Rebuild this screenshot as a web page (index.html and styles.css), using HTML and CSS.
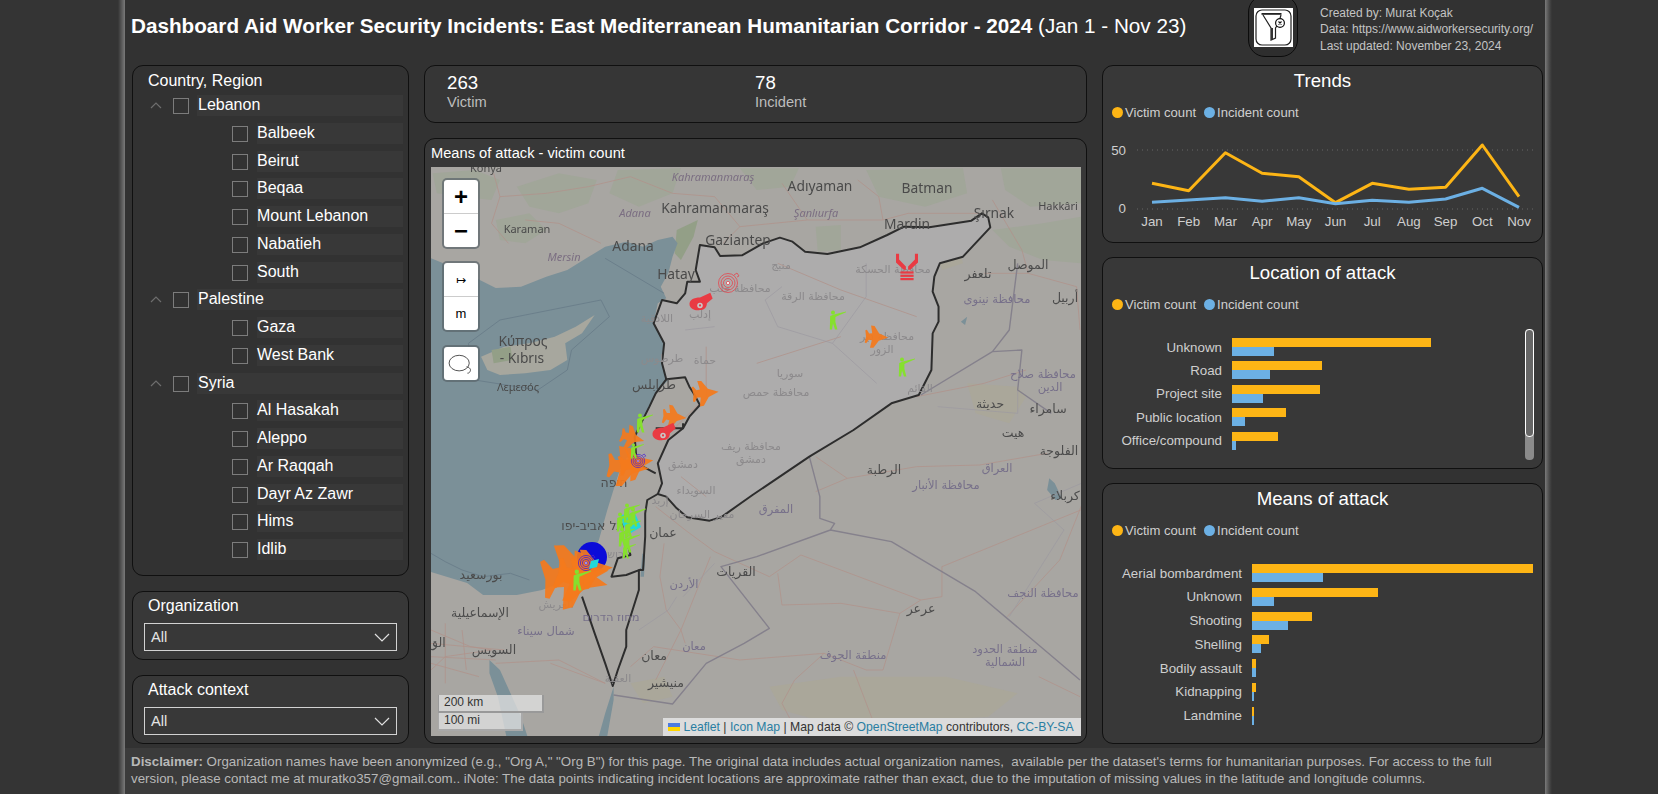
FILE: index.html
```html
<!DOCTYPE html>
<html lang="en">
<head>
<meta charset="utf-8">
<title>Dashboard Aid Worker Security Incidents</title>
<link rel="stylesheet" href="styles.css">
</head>
<body>
<div class="page">
  <div class="edge edge-left"></div>
  <main class="main">
    <header class="header">
      <h1 class="title"><b>Dashboard Aid Worker Security Incidents: East Mediterranean Humanitarian Corridor - 2024</b> (Jan 1 - Nov 23)</h1>
      <div class="logo">
        <svg class="logo-img" viewBox="0 0 39 39">
          <rect width="39" height="39" fill="#fff"/>
          <rect x="2" y="2" width="35" height="35" rx="6" class="logo-line"/>
          <rect x="7.5" y="5" width="20" height="1.8" fill="#222"/>
          <path d="M9 7L17 20V32L21.5 30V20L23.5 17M27 7L25.8 11" class="logo-line"/>
          <path d="M17 20V32L19 31.2V20Z" fill="#333"/>
          <circle cx="26" cy="15" r="4.4" fill="#fff" stroke="#111" stroke-width="1.2"/>
          <path d="M24.5 13.5L27.5 16.5M27.5 13.5L24.5 16.5" stroke="#111" stroke-width="1.1"/>
        </svg>
      </div>
      <div class="meta">
        <div>Created by: Murat Koçak</div>
        <div>Data: https://www.aidworkersecurity.org/</div>
        <div>Last updated: November 23, 2024</div>
      </div>
    </header>

    <div class="board">
      <section class="col col-left">
        <div class="panel slicer-tree">
          <div class="slicer-title">Country, Region</div>
          <div class="row parent"><svg class="chev-up" viewBox="0 0 12 7"><path d="M1 6L6 1L11 6"/></svg><span class="check"></span><span class="row-label">Lebanon</span></div>
          <div class="row child"><span class="check"></span><span class="row-label">Balbeek</span></div>
          <div class="row child"><span class="check"></span><span class="row-label">Beirut</span></div>
          <div class="row child"><span class="check"></span><span class="row-label">Beqaa</span></div>
          <div class="row child"><span class="check"></span><span class="row-label">Mount Lebanon</span></div>
          <div class="row child"><span class="check"></span><span class="row-label">Nabatieh</span></div>
          <div class="row child"><span class="check"></span><span class="row-label">South</span></div>
          <div class="row parent"><svg class="chev-up" viewBox="0 0 12 7"><path d="M1 6L6 1L11 6"/></svg><span class="check"></span><span class="row-label">Palestine</span></div>
          <div class="row child"><span class="check"></span><span class="row-label">Gaza</span></div>
          <div class="row child"><span class="check"></span><span class="row-label">West Bank</span></div>
          <div class="row parent"><svg class="chev-up" viewBox="0 0 12 7"><path d="M1 6L6 1L11 6"/></svg><span class="check"></span><span class="row-label">Syria</span></div>
          <div class="row child"><span class="check"></span><span class="row-label">Al Hasakah</span></div>
          <div class="row child"><span class="check"></span><span class="row-label">Aleppo</span></div>
          <div class="row child"><span class="check"></span><span class="row-label">Ar Raqqah</span></div>
          <div class="row child"><span class="check"></span><span class="row-label">Dayr Az Zawr</span></div>
          <div class="row child"><span class="check"></span><span class="row-label">Hims</span></div>
          <div class="row child"><span class="check"></span><span class="row-label">Idlib</span></div>
        </div>
        <div class="panel slicer-drop">
          <div class="slicer-title">Organization</div>
          <div class="dropdown"><span>All</span><svg class="chev-down" viewBox="0 0 16 9"><path d="M1 1L8 8L15 1"/></svg></div>
        </div>
        <div class="panel slicer-drop">
          <div class="slicer-title">Attack context</div>
          <div class="dropdown"><span>All</span><svg class="chev-down" viewBox="0 0 16 9"><path d="M1 1L8 8L15 1"/></svg></div>
        </div>
      </section>

      <section class="col col-mid">
        <div class="panel kpis">
          <div class="kpi"><div class="kpi-num">263</div><div class="kpi-label">Victim</div></div>
          <div class="kpi"><div class="kpi-num">78</div><div class="kpi-label">Incident</div></div>
        </div>
        <div class="panel map-card">
          <div class="map-title">Means of attack - victim count</div>
          <div class="map">
            <svg class="map-svg" width="650" height="569" viewBox="0 0 650 569">
              <defs>
                <g id="jet"><path d="M11 0L5-2.4 2-3.6-3-10.8-6.5-11.2-5-3.5-8-3.2-10.5-6.8-12-6.2-11 0-12 6.2-10.5 6.8-8 3.2-5 3.5-6.5 11.2-3 10.8 2 3.6 5 2.4Z"/></g>
                <g id="shooter"><circle cx="-2" cy="-7.5" r="2"/><path d="M-4.8-4L-1-5.6 2-6.2 11-8.6 11-7.7 3-4.2 0.4-3 0.4 2 2.4 9.5 0 9.5-2 3.5-3 9.5-5.2 9.5Z"/></g>
                <g id="cannon"><path d="M-9 3C-10-2-5-4 0-4L9-8 11-3 6 1C6 5 3 7 0 7-4 8-8 6-9 3Z"/><circle cx="0" cy="3" r="2.4" class="ic-hole"/><circle cx="0" cy="3" r="1"/></g>
                <g id="target" class="ic-ring"><circle r="9.5"/><circle r="7"/><circle r="4.5"/><circle r="1.6" class="ic-dot"/><path d="M6-8L9-10 11-7 9-6"/></g>
                <g id="hands"><path d="M-10-12H-7.2V-6.8L-1 -0.5V2.6H-3L-10-4Z"/><path d="M10-12H7.2V-6.8L1-0.5V2.6H3L10-4Z"/><rect x="-6" y="4" width="12" height="2"/><rect x="-6" y="7" width="12" height="2"/><rect x="-6" y="10" width="12" height="2"/></g>
              </defs>
              <rect width="650" height="569" class="m-land"/>
              <g transform="translate(-11 -37) scale(.4209 .33333)">
                <path class="m-green" d="M30 130L130 120 190 150 170 210 100 200 40 190ZM180 270L260 250 300 300 250 340 190 330ZM230 170L330 130 420 150 400 220 330 250 260 230ZM470 120L620 115 600 190 520 230 450 190ZM760 115L900 115 880 170 800 180ZM1060 120L1290 115 1300 190 1200 230 1090 200ZM1360 300L1480 280 1570 260 1570 400 1480 390 1400 350ZM1380 115L1570 115 1570 220 1450 230 1390 180ZM940 290L1000 285 1000 360 945 365Z"/>
                <path class="m-green-strong" d="M610 300L660 270 650 320 620 390 605 370Z"/>
                <path class="m-water" d="M26 385L48 396 110 430 180 474 240 470 300 440 350 420 395 385 440 350 490 335 530 350 565 330 600 320 612 340 600 380 590 430 572 470 585 505 565 520 555 580 580 640 575 700 590 750 560 790 545 830 520 900 500 970 480 1000 462 1070 445 1140 425 1230 395 1300 340 1355 290 1380 230 1395 150 1395 112 1359 26 1326Z"/>
                <path class="m-land-alt" d="M145 680L200 650 260 640 320 620 370 590 415 555 385 610 345 640 350 690 310 720 250 730 190 735 160 720Z"/>
                <path class="m-green-strong" d="M170 660L215 650 220 690 175 700Z"/>
                <path class="m-sea-line" d="M115 640L190 570 430 510 450 560 360 660 350 720 280 780 130 750ZM440 385L580 490M26 1270L60 1295 100 1320 150 1340 215 1330 260 1350"/>
                <path class="m-water" d="M165 1590L190 1620 215 1690 240 1760 255 1818 205 1818 185 1700 165 1630ZM460 1670L440 1750 425 1818 445 1818 460 1710ZM528 1270L535 1280 532 1340 524 1340ZM1300 560L1295 585 1285 575ZM1495 1045L1508 1060 1525 1105 1510 1110 1490 1080Z"/>
                <path class="m-desert" d="M830 1670L1000 1640 1250 1640 1420 1690 1350 1760 1000 1790 860 1740ZM500 1660L580 1640 600 1700 530 1720ZM1300 760L1420 770 1440 800 1400 880 1320 850ZM1225 370L1280 350 1290 400 1240 420Z"/>
                <path class="m-syria" d="M665 345L700 352 713 378 765 376 815 340 855 323 885 335 915 365 968 372 1045 352 1110 315 1150 290 1210 292 1310 272 1335 250 1350 262 1355 292 1290 380 1235 400 1222 440 1218 485 1232 530 1232 575 1218 610 1215 720 1185 795 1120 820 1030 900 925 980 790 1095 715 1162 688 1172 635 1162 610 1135 585 1100 565 1092 575 1060 565 1000 590 930 625 895 640 860 665 825 650 790 640 770 630 742 585 748 575 700 580 640 555 580 575 510 610 520 630 490 635 455 665 455 655 420Z"/>
                <path class="m-road" d="M175 130L190 200 170 280 210 340M190 200L300 190 400 170 500 140M250 270L330 280 430 340M500 140L600 190 700 200 760 290 720 340M760 290L920 270 1100 270 1160 250 1330 250M1100 270L1090 200 1040 150M860 160L920 270M1360 210L1430 360 1445 430 1560 470M1445 430L1340 430M1560 470L1568 600M1180 800L1340 760 1440 720M1015 1045L1180 1010 1330 1005 1490 970M940 1085L1015 1045 940 980M1570 1140L1240 1310 1240 1400 1190 1410 905 1275 830 1340 700 1265 630 1200 560 1130M1190 1410L1140 1450 1100 1620 1060 1620 960 1570 760 1590 555 1550 500 1610M1140 1450L1000 1420 860 1425 850 1330M960 1570L890 1650 860 1720 900 1818M1030 1620L1090 1818M580 1240L570 1340 585 1440 620 1500 630 1540M690 1280L620 1500 560 1650M26 1500L120 1550 170 1560 60 1580 26 1620M60 1480L60 1660M100 1500L110 1620M26 1540L200 1560M26 1580L180 1590M26 1600L140 1640M310 1600L440 1660M180 1600L330 1590 440 1660M1470 1640L1568 1700M1580 1100L1520 1290 1395 1460M850 400L1000 480 1180 560M680 650L680 800 600 900M800 700L1000 620M620 1040L680 1100"/>
                <path class="m-admin" d="M1060 400L1060 500 980 640 1085 760M860 470L820 510 850 590 980 640M700 590L630 600M625 1400L700 1300M1230 830L1420 850 1420 780M520 1500L590 1440 610 1400M1590 1050L1460 1120 1530 1200 1400 1460"/>
                <path class="m-border" d="M925 980L950 1100 950 1165 985 1180 975 1200 1120 1235 1320 1385 1568 1650M975 1200L800 1280 715 1310 830 1495 770 1540 680 1600 600 1722 460 1695M1190 795L1360 665 1430 660 1420 780 1500 850M1360 665L1400 600 1420 400"/>
                <path class="m-outline" d="M665 345L700 352 713 378 765 376 815 340 855 323 885 335 915 365 968 372 1045 352 1110 315 1150 290 1210 292 1310 272 1335 250 1350 262 1355 292 1290 380 1235 400 1222 440 1218 485 1232 530 1232 575 1218 610 1215 720 1185 795 1120 820 1030 900 925 980 790 1095 715 1162 688 1172 635 1162 610 1135 585 1100 565 1092 575 1060 565 1000 590 930 625 895 640 860 665 825 650 790 640 770 630 742 585 748 575 700 580 640 555 580 575 510 610 520 630 490 635 455 665 455 655 420Z"/>
                <path class="m-outline" d="M585 748L560 790 545 830 525 880 510 920 515 1000 560 1030M565 1092L540 1110 535 1150 535 1220 530 1320 520 1320 520 1380 490 1500 490 1550 470 1620 458 1668 440 1600 415 1510 385 1400M495 1250L500 1275 470 1285 455 1340 490 1335 525 1318M560 895L625 895 625 880"/>
              </g>
              <g class="lbl lbl-ital">
                <text x="282" y="14">Kahramanmaraş</text><text x="385" y="50">Şanlıurfa</text><text x="204" y="50">Adana</text><text x="133" y="94">Mersin</text>
              </g>
              <g class="lbl lbl-big">
                <text x="389" y="24">Adıyaman</text><text x="496" y="26">Batman</text><text x="284" y="46">Kahramanmaraş</text><text x="563" y="51">Şırnak</text><text x="476" y="62">Mardin</text><text x="307" y="78">Gaziantep</text><text x="202" y="84">Adana</text><text x="245" y="112">Hatay</text><text x="92" y="179">Κύπρος</text><text x="91" y="196">- Kıbrıs</text>
              </g>
              <g class="lbl lbl-small">
                <text x="55" y="5">Konya</text><text x="627" y="43">Hakkâri</text><text x="96" y="66">Karaman</text><text x="87" y="224">Λεμεσός</text>
              </g>
              <g class="ar ar-dark">
                <text x="597" y="102">الموصل</text><text x="547" y="111">تلعفر</text><text x="223" y="222">طرابلس</text><text x="453" y="307">الرطبة</text><text x="628" y="288">الفلوجة</text><text x="634" y="333">كربلاء</text><text x="582" y="270">هيت</text><text x="232" y="370">عمان</text><text x="305" y="409">القريات</text><text x="50" y="412">بورسعيد</text><text x="49" y="450">الإسماعيلية</text><text x="63" y="487">السويس</text><text x="223" y="493">معان</text><text x="235" y="520">منيشير</text><text x="490" y="446">عرعر</text><text x="559" y="241">حديثة</text><text x="617" y="246">سامراء</text><text x="183" y="320">חיפה</text><text x="162" y="363">תל אביב-יפו</text><text x="6" y="480">الق</text><text x="634" y="135">أربيل</text>
              </g>
              <g class="ar ar-purple">
                <text x="566" y="136">محافظة نينوى</text><text x="566" y="305">العراق</text><text x="515" y="322">محافظة الأنبار</text><text x="345" y="346">المفرق</text><text x="253" y="421">الأردن</text><text x="115" y="468">شمال سيناء</text><text x="180" y="454">מחוז הדרום</text><text x="263" y="483">معان</text><text x="422" y="492">منطقة الجوف</text><text x="574" y="486">منطقة الحدود</text><text x="574" y="499">الشمالية</text><text x="612" y="430">محافظة النجف</text><text x="612" y="211">محافظة صلاح</text><text x="619" y="224">الدين</text>
              </g>
              <g class="ar ar-faint">
                <text x="350" y="102">منبج</text><text x="309" y="125">محافظة حلب</text><text x="462" y="106">محافظة الحسكة</text><text x="382" y="133">محافظة الرقة</text><text x="269" y="151">إدلب</text><text x="226" y="155">اللاذقية</text><text x="231" y="195">طرطوس</text><text x="274" y="197">حماة</text><text x="359" y="210">سوريا</text><text x="345" y="229">محافظة حمص</text><text x="456" y="173">محافظة دير</text><text x="451" y="186">الزور</text><text x="489" y="225">القائم</text><text x="320" y="283">محافظة ريف</text><text x="320" y="296">دمشق</text><text x="252" y="301">دمشق</text><text x="265" y="327">السويداء</text><text x="229" y="337">إربد</text><text x="271" y="351">مفير السرحان</text><text x="178" y="391">ירושלים</text><text x="125" y="441">العريش</text><text x="187" y="515">العقبة</text>
              </g>
              <g class="ic-blue"><circle cx="161" cy="390" r="15"/></g>
              <g class="ic-orange">
                <use href="#jet" transform="translate(446 170) rotate(3)"/>
                <use href="#jet" transform="translate(275 226) rotate(-6) scale(1.15)"/>
                <use href="#jet" transform="translate(244 250) rotate(5) scale(1.05)"/>
                <use href="#jet" transform="translate(202 271) rotate(15) scale(1.05)"/>
                <use href="#jet" transform="translate(198 300) rotate(5) scale(1.8)"/>
                <use href="#jet" transform="translate(206 296) rotate(-10) scale(1.5)"/>
                <use href="#jet" transform="translate(146 408) rotate(-8) scale(2.9)"/>
                <use href="#jet" transform="translate(152 412) rotate(14) scale(2.3)"/>
                <use href="#jet" transform="translate(162 402) rotate(-4) scale(1.8)"/>
              </g>
              <g class="ic-blue-ring"><use href="#target" transform="translate(207 294) scale(.7)"/><use href="#target" transform="translate(155 396) scale(.8)"/></g>
              <g class="ic-red-ring"><use href="#target" transform="translate(297 116)"/></g>
              <g class="ic-red">
                <use href="#cannon" transform="translate(269 135) scale(1.15)"/>
                <use href="#cannon" transform="translate(232 265) scale(1.15)"/>
                <use href="#hands" transform="translate(476 100) scale(1.1)"/>
              </g>
              <g class="ic-cyan"><path d="M190 348L204 346 210 360 200 366 192 358ZM160 394L168 392 166 400 158 402Z"/></g>
              <g class="ic-green">
                <use href="#shooter" transform="translate(404 153)"/>
                <use href="#shooter" transform="translate(473 200)"/>
                <use href="#shooter" transform="translate(211 256)"/>
                <use href="#shooter" transform="translate(204 284) scale(.8)"/>
                <use href="#shooter" transform="translate(198 346)"/>
                <use href="#shooter" transform="translate(204 350)"/>
                <use href="#shooter" transform="translate(191 355)"/>
                <use href="#shooter" transform="translate(199 362)"/>
                <use href="#shooter" transform="translate(193 370)"/>
                <use href="#shooter" transform="translate(198 376)"/>
                <use href="#shooter" transform="translate(196 384) scale(.8)"/>
                <use href="#shooter" transform="translate(148 413) scale(1.1)"/>
              </g>
            </svg>
            <div class="ctl ctl-zoom"><div class="ctl-btn ctl-big">+</div><div class="ctl-btn ctl-big">−</div></div>
            <div class="ctl ctl-measure"><div class="ctl-btn ctl-small">↦</div><div class="ctl-btn ctl-m">m</div></div>
            <div class="ctl ctl-lasso"><div class="ctl-btn"><svg class="lasso" viewBox="0 0 30 24"><ellipse cx="13" cy="11" rx="11" ry="8.5"/><path d="M21 15C25 16 26 18 25 20 24 22 23 22 22 22"/></svg></div></div>
            <div class="scale"><div class="scale-line scale-km">200 km</div><div class="scale-line scale-mi">100 mi</div></div>
            <div class="attrib"><svg class="flag" viewBox="0 0 12 8"><rect width="12" height="4" fill="#4C7BE1"/><rect y="4" width="12" height="4" fill="#FFD500"/></svg> <a>Leaflet</a> | <a>Icon Map</a> | Map data © <a>OpenStreetMap</a> contributors, <a>CC-BY-SA</a></div>
          </div>
        </div>
      </section>

      <section class="col col-right">
        <div class="panel chart trends">
          <div class="chart-title">Trends</div>
          <div class="legend"><span class="dot dot-a"></span><span class="leg">Victim count</span><span class="dot dot-b"></span><span class="leg">Incident count</span></div>
          <svg class="trend-svg" viewBox="1 55 438 120">
            <line x1="35" x2="432" y1="85" y2="85" class="grid"/>
            <line x1="35" x2="432" y1="144" y2="144" class="grid"/>
            <polyline class="line-a" points="50,118.3 86.7,125.7 123.4,87.7 160.1,108.3 196.8,111.7 233.5,137.7 270.2,118.3 306.9,124.3 343.6,122.3 380.3,80 417,131.7"/>
            <polyline class="line-b" points="50,137.3 86.7,135 123.4,132.7 160.1,136.3 196.8,132.7 233.5,138.7 270.2,135.3 306.9,137.3 343.6,134 380.3,123.3 417,142.3"/>
            <g class="axis-y"><text x="24" y="90">50</text><text x="24" y="148">0</text></g>
            <g class="axis-x"><text x="50" y="161">Jan</text><text x="86.7" y="161">Feb</text><text x="123.4" y="161">Mar</text><text x="160.1" y="161">Apr</text><text x="196.8" y="161">May</text><text x="233.5" y="161">Jun</text><text x="270.2" y="161">Jul</text><text x="306.9" y="161">Aug</text><text x="343.6" y="161">Sep</text><text x="380.3" y="161">Oct</text><text x="417" y="161">Nov</text></g>
          </svg>
        </div>
        <div class="panel chart location">
          <div class="chart-title">Location of attack</div>
          <div class="legend"><span class="dot dot-a"></span><span class="leg">Victim count</span><span class="dot dot-b"></span><span class="leg">Incident count</span></div>
          <div class="bars bars-loc">
            <div class="bar-row"><span class="bar-label">Unknown</span><div class="bar-pair"><i class="bar bar-a" style="width:199px"></i><i class="bar bar-b" style="width:42px"></i></div></div>
            <div class="bar-row"><span class="bar-label">Road</span><div class="bar-pair"><i class="bar bar-a" style="width:90px"></i><i class="bar bar-b" style="width:38px"></i></div></div>
            <div class="bar-row"><span class="bar-label">Project site</span><div class="bar-pair"><i class="bar bar-a" style="width:88px"></i><i class="bar bar-b" style="width:31px"></i></div></div>
            <div class="bar-row"><span class="bar-label">Public location</span><div class="bar-pair"><i class="bar bar-a" style="width:54px"></i><i class="bar bar-b" style="width:13px"></i></div></div>
            <div class="bar-row"><span class="bar-label">Office/compound</span><div class="bar-pair"><i class="bar bar-a" style="width:46px"></i><i class="bar bar-b" style="width:4px"></i></div></div>
          </div>
          <div class="scrollbar"><div class="scroll-thumb"></div></div>
        </div>
        <div class="panel chart means">
          <div class="chart-title">Means of attack</div>
          <div class="legend"><span class="dot dot-a"></span><span class="leg">Victim count</span><span class="dot dot-b"></span><span class="leg">Incident count</span></div>
          <div class="bars bars-means">
            <div class="bar-row"><span class="bar-label">Aerial bombardment</span><div class="bar-pair"><i class="bar bar-a" style="width:281px"></i><i class="bar bar-b" style="width:71px"></i></div></div>
            <div class="bar-row"><span class="bar-label">Unknown</span><div class="bar-pair"><i class="bar bar-a" style="width:126px"></i><i class="bar bar-b" style="width:22px"></i></div></div>
            <div class="bar-row"><span class="bar-label">Shooting</span><div class="bar-pair"><i class="bar bar-a" style="width:60px"></i><i class="bar bar-b" style="width:36px"></i></div></div>
            <div class="bar-row"><span class="bar-label">Shelling</span><div class="bar-pair"><i class="bar bar-a" style="width:17px"></i><i class="bar bar-b" style="width:9px"></i></div></div>
            <div class="bar-row"><span class="bar-label">Bodily assault</span><div class="bar-pair"><i class="bar bar-a" style="width:4px"></i><i class="bar bar-b" style="width:4px"></i></div></div>
            <div class="bar-row"><span class="bar-label">Kidnapping</span><div class="bar-pair"><i class="bar bar-a" style="width:4px"></i><i class="bar bar-b" style="width:2px"></i></div></div>
            <div class="bar-row"><span class="bar-label">Landmine</span><div class="bar-pair"><i class="bar bar-a" style="width:2px"></i><i class="bar bar-b" style="width:2px"></i></div></div>
          </div>
        </div>
      </section>
    </div>

    <footer class="footer"><b>Disclaimer:</b> Organization names have been anonymized (e.g., "Org A," "Org B") for this page. The original data includes actual organization names,&nbsp; available per the dataset's terms for humanitarian purposes. For access to the full<br>version, please contact me at muratko357@gmail.com.. iNote: The data points indicating incident locations are approximate rather than exact, due to the imputation of missing values in the latitude and longitude columns.</footer>
  </main>
  <div class="edge edge-right"></div>
</div>
</body>
</html>
```
FILE: styles.css
```css
* { box-sizing: border-box; }
html, body { margin: 0; height: 100%; }
body { background: #343434; font-family: "Liberation Sans", Arial, sans-serif; color: #fff; overflow: hidden; }

.page { display: flex; height: 794px; padding-left: 118px; }
.edge { width: 7px; height: 100%; }
.edge-left { background: linear-gradient(90deg, #343434, #7a7a7a); }
.edge-right { background: linear-gradient(90deg, #7a7a7a, #4a4a4a 60%, #343434); }
.main { width: 1420px; height: 794px; background: #323232; display: flex; flex-direction: column; }

.header { height: 65px; display: flex; padding-left: 6px; flex-shrink: 0; }
.title { flex: 1; margin: 0; font-size: 20.7px; font-weight: 400; line-height: 52px; white-space: nowrap; }
.title b { font-weight: 700; }
.logo { width: 50px; height: 62px; margin-top: -5px; background: #2e2e2e; border: 1px solid #0c0c0c; border-radius: 17px; display: flex; align-items: center; justify-content: center; }
.logo-img { width: 39px; height: 39px; margin-top: 3px; }
.logo-line { fill: none; stroke: #222; stroke-width: 1.2; }
.meta { width: 225px; margin-left: 22px; padding-top: 5px; font-size: 12px; line-height: 16.4px; color: #c4c4c4; white-space: nowrap; }

.board { display: flex; gap: 15px; padding-left: 7px; height: 679px; flex-shrink: 0; }
.col { display: flex; flex-direction: column; }
.col-left { width: 277px; gap: 15px; }
.col-mid { width: 663px; gap: 15px; }
.col-right { width: 441px; gap: 14px; }

.panel { background: #383838; border: 1px solid #101010; border-radius: 11px; position: relative; }

.slicer-tree { height: 511px; background: #323232; }
.slicer-title { font-size: 16px; line-height: 28px; padding-left: 15px; color: #fff; }
.slicer-tree .slicer-title { line-height: 29px; }
.row { height: 27.75px; display: flex; align-items: flex-start; }
.parent { padding-left: 17px; }
.child { padding-left: 99px; }
.chev-up { width: 12px; height: 7px; margin: 7px 11px 0 0; fill: none; stroke: #6e6e6e; stroke-width: 1.2; flex-shrink: 0; }
.check { width: 16px; height: 16px; border: 1px solid #7c7c7c; margin-top: 3px; flex-shrink: 0; }
.parent .check { margin-right: 8px; }
.child .check { margin-right: 9px; }
.row-label { width: 100%; height: 21px; line-height: 19px; background: #383838; font-size: 16px; margin-right: 5px; }
.parent .row-label { padding-left: 1px; }

.slicer-drop { flex: 1; }
.dropdown { margin: 3px 0 0 11px; width: 253px; height: 28px; border: 1.5px solid #d2d2d2; padding: 0 6px; display: flex; align-items: center; justify-content: space-between; font-size: 14.67px; color: #e4e4e4; }
.chev-down { width: 16px; height: 9px; fill: none; stroke: #e0e0e0; stroke-width: 1.2; }

.kpis { height: 58px; display: flex; background: #363636; }
.kpi { width: 308px; padding: 6px 0 0 22px; }
.kpi-num { font-size: 18.67px; line-height: 22px; }
.kpi-label { font-size: 14.67px; line-height: 17px; color: #bdbdbd; }

.map-card { flex: 1; padding: 0 5px 0 6px; }
.map-title { font-size: 14.67px; line-height: 28px; color: #fff; }
.map { position: relative; width: 650px; height: 569px; overflow: hidden; background: #a8a6a1; }
.map-svg { display: block; filter: blur(.45px); }

.m-land { fill: #a8a6a2; }
.m-land-alt { fill: #a7a79e; }
.m-green { fill: #a1a699; }
.m-green-strong { fill: #939f87; }
.m-water { fill: #7b9098; }
.m-desert { fill: #aaa79a; }
.m-syria { fill: #adacac; }
.m-sea-line, .m-road, .m-admin, .m-border, .m-outline { fill: none; vector-effect: non-scaling-stroke; stroke-linejoin: round; }
.m-sea-line { stroke: #6b7f8b; stroke-width: 1; }
.m-road { stroke: #b0938c; stroke-width: .8; }
.m-admin { stroke: #9c9aa0; stroke-width: .7; }
.m-border { stroke: #85818c; stroke-width: 1.4; }
.m-outline { stroke: #2d2d2d; stroke-width: 2; }

.lbl text, .ar text { text-anchor: middle; }
.lbl { font-family: "Noto Sans", sans-serif; fill: #4a4a4a; }
.lbl-big { font-size: 13.8px; }
.lbl-small { font-size: 11px; }
.lbl-ital { font-size: 11px; font-style: italic; fill: #7b6e82; }
.ar { font-family: "DejaVu Sans", sans-serif; }
.ar-dark { font-size: 12.5px; fill: #4c4c4c; }
.ar-purple { font-size: 11.5px; fill: #77708a; }
.ar-faint { font-size: 11px; fill: #8c8a8c; }

.ic-orange { fill: #f47a1c; fill-opacity: .93; }
.ic-red { fill: #e93b43; }
.ic-red-ring { fill: none; stroke: #e4444c; stroke-width: .8; }
.ic-blue-ring { fill: none; stroke: #4a1fd0; stroke-width: 1; }
.ic-dot { fill: currentColor; }
.ic-hole { fill: #c8c8c8; }
.ic-blue { fill: #0b0bd8; }
.ic-cyan { fill: #22d8d8; }
.ic-green { fill: #86e02e; }

.ctl { position: absolute; left: 13px; width: 34px; background: #fff; border-radius: 3px; box-shadow: 0 0 0 2px rgba(90, 100, 105, .7); color: #000; }
.ctl-zoom { top: 13px; }
.ctl-measure { top: 96px; }
.ctl-lasso { top: 180px; }
.ctl-btn { height: 34px; display: flex; align-items: center; justify-content: center; border-bottom: 1px solid #ccc; }
.ctl-btn:last-child { border-bottom: 0; height: 33px; }
.ctl-big { font: 700 24px "Liberation Sans", sans-serif; }
.ctl-small { font: 12px "DejaVu Sans", sans-serif; }
.ctl-m { font: 13px "Liberation Sans", sans-serif; }
.lasso { width: 28px; height: 22px; fill: none; stroke: #444; stroke-width: 1; }

.scale { position: absolute; left: 7px; bottom: 5px; font-size: 12px; color: #333; }
.scale-line { height: 18px; line-height: 15px; padding-left: 5px; background: rgba(225, 225, 225, .75); border: 2px solid #999; border-top: 0; border-left-width: 1px; }
.scale-km { width: 106px; }
.scale-mi { width: 85px; border-color: #a9a9a9; }

.attrib { position: absolute; right: 0; bottom: 0; height: 18px; width: 418px; padding-left: 5px; line-height: 18px; font-size: 12.2px; background: #dcdcdc; color: #333; white-space: nowrap; }
.attrib a { color: #2a7ea2; }
.flag { width: 12px; height: 8px; }

.chart-title { font-size: 18.67px; line-height: 29px; text-align: center; color: #fff; }
.trends { height: 178px; }
.location { height: 212px; }
.means { height: 261px; }
.legend { display: flex; align-items: center; height: 16px; margin-top: 9px; padding-left: 9px; font-size: 13.1px; color: #cfcfcf; }
.dot { width: 11px; height: 11px; border-radius: 50%; margin-right: 2px; flex-shrink: 0; }
.dot-a { background: #fdb515; }
.dot-b { background: #6cb0e4; }
.leg { margin-right: 8px; }

.trend-svg { display: block; width: 438px; height: 120px; }
.grid { stroke: #666; stroke-width: 1; stroke-dasharray: 1 4; }
.line-a, .line-b { fill: none; stroke-width: 3; stroke-linejoin: round; }
.line-a { stroke: #fdb515; }
.line-b { stroke: #6cb0e4; }
.axis-y text { font-size: 13.33px; fill: #cfcfcf; text-anchor: end; }
.axis-x text { font-size: 13.33px; fill: #cfcfcf; text-anchor: middle; }

.bars { margin-top: 26px; }
.bar-row { display: flex; align-items: center; height: 18px; margin-bottom: 5.4px; }
.bar-label { flex-shrink: 0; text-align: right; font-size: 13.33px; color: #cfcfcf; white-space: nowrap; }
.bars-loc .bar-label { width: 119px; margin-right: 10px; }
.bars-means .bar-label { width: 139px; margin-right: 10px; }
.bars-means .bar-row { margin-bottom: 5.75px; }
.bar-pair { display: flex; flex-direction: column; }
.bar { display: block; height: 9px; }
.bar-a { background: #fdb515; }
.bar-b { background: #6cb0e4; }

.scrollbar { position: absolute; left: 422px; top: 71px; width: 9px; height: 131px; background: #8b8b8b; border-radius: 4px; }
.scroll-thumb { height: 108px; background: #666; border: 1.5px solid #fff; border-radius: 4px; border-left-width: 1px; border-right-width: 1px; }

.footer { margin-top: 4px; flex: 1; background: #3b3b3b; padding: 5px 0 0 6px; font-size: 13.33px; line-height: 17px; color: #b8b8b8; white-space: nowrap; }
```
